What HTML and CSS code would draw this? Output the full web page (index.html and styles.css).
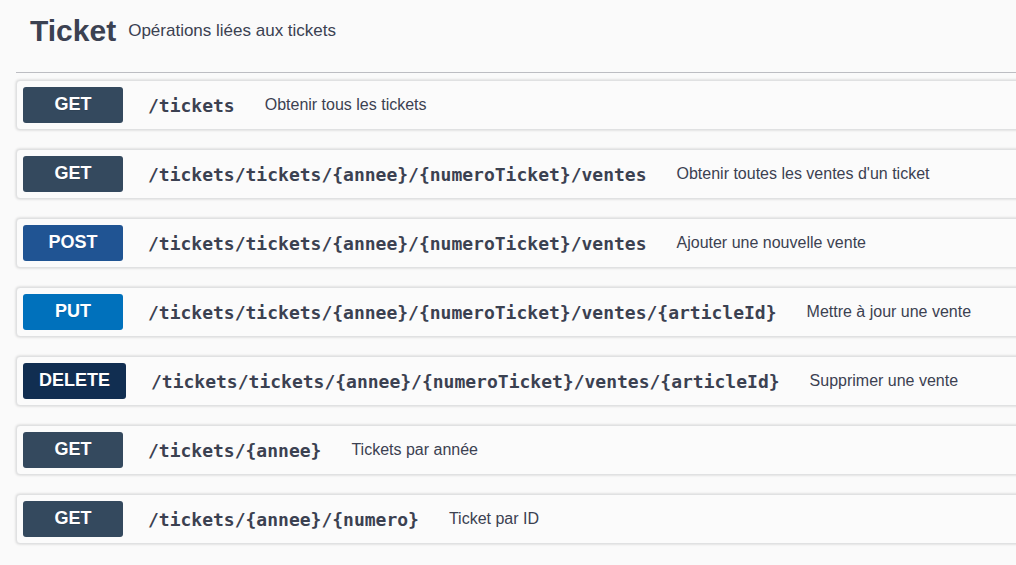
FILE: index.html
```html
<!DOCTYPE html>
<html lang="fr">
<head>
<meta charset="utf-8">
<title>Ticket</title>
<link rel="stylesheet" href="styles.css">
</head>
<body>
<main class="tag-section">
  <header class="tag-header">
    <h3 class="tag-name">Ticket</h3>
    <p class="tag-description">Opérations liées aux tickets</p>
  </header>
  <div class="operations">
    <button type="button" class="operation"><span class="method get">GET</span><span class="path">/tickets</span><span class="summary">Obtenir tous les tickets</span></button>
    <button type="button" class="operation"><span class="method get">GET</span><span class="path">/tickets/tickets/{annee}/{numeroTicket}/ventes</span><span class="summary">Obtenir toutes les ventes d'un ticket</span></button>
    <button type="button" class="operation"><span class="method post">POST</span><span class="path">/tickets/tickets/{annee}/{numeroTicket}/ventes</span><span class="summary">Ajouter une nouvelle vente</span></button>
    <button type="button" class="operation"><span class="method put">PUT</span><span class="path">/tickets/tickets/{annee}/{numeroTicket}/ventes/{articleId}</span><span class="summary">Mettre à jour une vente</span></button>
    <button type="button" class="operation"><span class="method delete">DELETE</span><span class="path">/tickets/tickets/{annee}/{numeroTicket}/ventes/{articleId}</span><span class="summary">Supprimer une vente</span></button>
    <button type="button" class="operation"><span class="method get">GET</span><span class="path">/tickets/{annee}</span><span class="summary">Tickets par année</span></button>
    <button type="button" class="operation"><span class="method get">GET</span><span class="path">/tickets/{annee}/{numero}</span><span class="summary">Ticket par ID</span></button>
  </div>
</main>
</body>
</html>
```
FILE: styles.css
```css
* {
  box-sizing: border-box;
}

body {
  margin: 0;
  background: #fafafa;
  color: #3b4151;
  font-family: "Liberation Sans", Arial, sans-serif;
  overflow-x: hidden;
}

.tag-section {
  padding-left: 16px;
}

.tag-header {
  display: flex;
  align-items: center;
  gap: 12px;
  padding: 14px 14px 24px;
  border-bottom: 1px solid #bcbdc2;
}

.tag-name {
  margin: 0;
  font-size: 30px;
  line-height: 34px;
}

.tag-description {
  margin: 0;
  font-size: 17px;
}

.operations {
  display: grid;
  gap: 19px;
  padding: 7px 0 20px;
  margin-right: -8px;
}

.operation {
  display: flex;
  align-items: center;
  width: 100%;
  padding: 6px;
  border: 1px solid #e0e1e2;
  border-radius: 4px;
  background: #fbfbfb;
  box-shadow: 0 0 3px rgba(0, 0, 0, 0.19);
  color: inherit;
  font: inherit;
  text-align: left;
  white-space: nowrap;
  cursor: pointer;
}

.method {
  min-width: 100px;
  padding: 0 16px 2px;
  border-radius: 3px;
  color: #fff;
  font-size: 18px;
  font-weight: 700;
  line-height: 34px;
  text-align: center;
  text-shadow: 0 1px 0 rgba(0, 0, 0, 0.1);
}

.get {
  background: #34495e;
}

.post {
  background: #205493;
}

.put {
  background: #0071bc;
}

.delete {
  background: #112e51;
}

.path {
  margin-left: 25px;
  font-family: "DejaVu Sans Mono", monospace;
  font-size: 18px;
  font-weight: 700;
}

.summary {
  margin-left: 30px;
  font-size: 16px;
  line-height: 20px;
}
```
